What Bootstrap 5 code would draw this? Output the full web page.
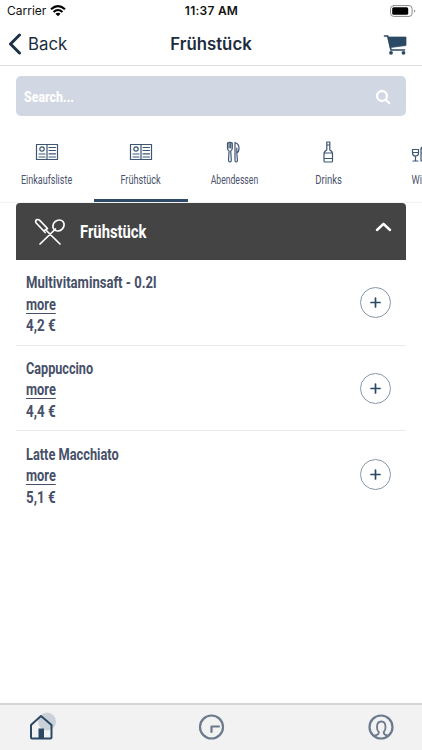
<!DOCTYPE html>
<html lang="de">
<head>
<meta charset="utf-8">
<meta name="viewport" content="width=device-width, initial-scale=1">
<title>Frühstück</title>
<link href="https://cdn.jsdelivr.net/npm/bootstrap@5.3.0/dist/css/bootstrap.min.css" rel="stylesheet">
<style>
body{font-family:Inter,"Liberation Sans",sans-serif;color:#1d2d40;background:#fff;height:750px;overflow:hidden}
svg{display:block;flex:none;fill:none;stroke-linecap:round;stroke-linejoin:round}
.status{height:22px;font-size:12px;line-height:22px;color:#111;padding:0 6px 0 7px}
.status .side{flex:1 1 0}
.wifi{stroke-linecap:butt}
.clock{font-weight:600;letter-spacing:.25px}
.topbar{height:44px;border-bottom:1px solid #dcdcde;padding:0 8px}
.topbar .side{flex:1 1 0}
.cart{margin:2px 7px 0 0}
.back{font-size:16.8px;line-height:20px;margin-left:6px}
.title{font-size:16.8px;font-weight:600;line-height:20px}
.narrow{font-family:Roboto,"Liberation Sans",sans-serif;display:inline-block;white-space:nowrap;transform-origin:0 50%;transform:scaleX(.8)}
.search{height:40px;margin:10px 16px 0;background:#d1d7e3;border-radius:5px;padding:1px 15px 0 8px}
.search .narrow{color:#fff;font-weight:800;font-size:15.5px;transform:scaleX(.8);margin-top:2px}
.tabs{height:87px;border-bottom:1px solid #f3f3f3}
.tab{flex:0 0 93.75px;padding-top:23px;border-bottom:3px solid transparent}
.tab.active{border-color:#2e4a66}
.tab svg{stroke:#3d5672;stroke-width:1.2}
.tab .narrow{font-size:12.5px;line-height:18px;margin-top:6px;color:#4a536b;transform-origin:50% 50%}
.tab .t1{transform:scaleX(.72)}
.tab .t2{transform:scaleX(.73)}
.tab .t3{transform:scaleX(.69)}
.tab .t4{transform:scaleX(.76)}
.tab .t5{transform:scaleX(.74)}
.group{margin:0 16px}
.grouphead{height:57px;background:#444;border-radius:4px 4px 0 0;padding:0 14px 0 18px}
.grouphead .narrow{color:#fff;font-weight:700;font-size:18.5px;margin:3px 0 0 14px}
.chevron{margin-bottom:10px}
.item{height:85.6px;border-bottom:1px solid #e8e9eb;padding:1px 15px 0 10px}
.item:last-child{border:0}
.lines{padding-top:3px}
.item .narrow{font-size:16px;font-weight:700;line-height:21.4px;color:#475068}
.item .i1{transform:scaleX(.817)}
.item .i2{transform:scaleX(.79)}
.item .price{transform:scaleX(.835)}
.more{text-decoration:underline;text-decoration-thickness:1px;text-underline-offset:2.5px}
.add{width:31px;height:31px;border:1px solid #8797a8;border-radius:50%;background:#fff}
.bottombar{height:47px;background:#f2f2f2;border-top:2px solid #d5d5d8;padding:0 27px 2px 28px}
</style>
<script src="https://cdn.jsdelivr.net/npm/bootstrap@5.3.0/dist/js/bootstrap.bundle.min.js"></script>
</head>
<body class="d-flex flex-column">
<div class="status d-flex align-items-center flex-shrink-0">
  <div class="side d-flex align-items-center gap-1"><span>Carrier</span>
    <svg class="wifi" width="16" height="12" viewBox="0 0 16 12" stroke="#000" stroke-width="2.1"><path d="M1 4.2Q8-2 15 4.2M3.5 7Q8 3 12.5 7"/><path d="M8 11.2 5.4 8.7Q8 6.600 10.600 8.700Z" fill="#000" stroke="none"/></svg>
  </div>
  <div class="clock">11:37 AM</div>
  <div class="side d-flex justify-content-end"><svg width="26" height="12" viewBox="0 0 26 12"><rect x=".6" y=".6" width="21.5" height="10.8" rx="3" stroke="#888"/><rect x="2.2" y="2.2" width="16" height="7.6" rx="1.6" fill="#000"/><path d="M24 4.4v3.2q1.3-.5 1.3-1.6T24 4.4" fill="#999"/></svg></div>
</div>
<header class="topbar d-flex align-items-center flex-shrink-0">
  <div class="side d-flex align-items-center"><svg width="14" height="22" viewBox="0 0 14 22" stroke="#1d3044" stroke-width="3"><path d="M11.500 2 2.500 11l9 9"/></svg><span class="back">Back</span></div>
  <div class="title">Frühstück</div>
  <div class="side d-flex justify-content-end"><svg class="cart" width="24" height="22" viewBox="0 0 24 22" stroke="#2b4865" stroke-width="1.6"><path d="M1.500 2h3.200l3.300 14H21.500"/><path d="M5.500 3H23v8.500L7.600 13.500Z" fill="#2b4865" stroke-width=".7"/><circle cx="8" cy="18.800" r="1.900" fill="#2b4865" stroke="none"/><circle cx="20.500" cy="18.800" r="1.900" fill="#2b4865" stroke="none"/></svg></div>
</header>
<div class="search d-flex align-items-center justify-content-between flex-shrink-0"><span class="narrow">Search...</span>
  <svg width="16" height="16" viewBox="0 0 16 16" stroke="#fff" stroke-width="2.3"><circle cx="7" cy="7" r="5"/><path d="m11 11 3.300 3.300"/></svg>
</div>
<nav class="tabs d-flex overflow-hidden flex-shrink-0">
  <div class="tab d-flex flex-column align-items-center"><svg width="24" height="26" viewBox="0 0 24 26"><path d="M1.500 5.500h21v15h-21zM12 5.500v15M4 15h6M4 18h6M14 8.500h6.500M14 11.500h6.500M14 14.800h6.500M14 18h6.500"/><circle cx="7" cy="10" r="2.200"/></svg><span class="narrow t1">Einkaufsliste</span></div>
  <div class="tab active d-flex flex-column align-items-center"><svg width="24" height="26" viewBox="0 0 24 26"><path d="M1.500 5.500h21v15h-21zM12 5.500v15M4 15h6M4 18h6M14 8.500h6.500M14 11.500h6.500M14 14.800h6.500M14 18h6.500"/><circle cx="7" cy="10" r="2.200"/></svg><span class="narrow t2">Frühstück</span></div>
  <div class="tab d-flex flex-column align-items-center"><svg width="24" height="26" viewBox="0 0 24 26" stroke-width="1"><path d="M5.500 4v5q0 2.300 1.600 3L6.500 21q0 2 1.400 2t1.400-2L8.700 12q1.600-.7 1.600-3V4q-2.400-1.300-4.800 0M7.100 4v5M8.700 4v5M13 3.500v18q0 1.500 1.200 1.500t1.200-1.500L14.800 14q2.200-1 2.200-5 0-4-4-5.500M14.800 14V9"/></svg><span class="narrow t3">Abendessen</span></div>
  <div class="tab d-flex flex-column align-items-center"><svg width="24" height="26" viewBox="0 0 24 26"><path d="M10.800 3h3v8q2.700 1.200 2.700 4v7q0 1-1 1H9q-1 0-1-1V15q0-2.800 2.800-4zM8 14h8.500M8 19.500h8.500M10.800 6h3"/></svg><span class="narrow t4">Drinks</span></div>
  <div class="tab d-flex flex-column align-items-center"><svg width="24" height="26" viewBox="0 0 24 26"><path d="M2.500 10.500h6v3.500q0 3-3 3t-3-3zM2.500 13.500h6M5.500 17v5M3 22h5M11 22V10q0-2 2-2V3h3v5q2 0 2 2v12zM11 10h7M11 14h7"/></svg><span class="narrow t5">Wine</span></div>
</nav>
<main class="group flex-grow-1">
  <div class="grouphead d-flex align-items-center">
    <svg width="32" height="30" viewBox="0 0 32 30" stroke="#fff" stroke-width="1.700"><path d="M6 27 21.500 12M26 27 12.800 14M11.200 15.500 2.200 6Q.8 3.400 3 2.600 4.500 2.200 6 3.700L13.500 11.500 9.800 14"/><ellipse cx="24.500" cy="8.500" rx="6" ry="5.100" transform="rotate(-42 24.500 8.500)"/></svg>
    <span class="narrow">Frühstück</span>
    <svg class="chevron ms-auto" width="18" height="12" viewBox="0 0 18 12" stroke="#fff" stroke-width="2.500"><path d="M3 9 9.500 2.800 16 9"/></svg>
  </div>
  <div>
    <div class="item d-flex align-items-center justify-content-between"><div class="lines d-flex flex-column align-items-start"><span class="narrow i1">Multivitaminsaft - 0.2l</span><span class="narrow more">more</span><span class="narrow price">4,2 €</span></div>
      <div class="add d-flex align-items-center justify-content-center"><svg width="11" height="11" viewBox="0 0 11 11" stroke="#2b4865" stroke-width="1.700"><path d="M1 5.500h9M5.500 1v9"/></svg></div></div>
    <div class="item d-flex align-items-center justify-content-between"><div class="lines d-flex flex-column align-items-start"><span class="narrow i2">Cappuccino</span><span class="narrow more">more</span><span class="narrow price">4,4 €</span></div>
      <div class="add d-flex align-items-center justify-content-center"><svg width="11" height="11" viewBox="0 0 11 11" stroke="#2b4865" stroke-width="1.700"><path d="M1 5.500h9M5.500 1v9"/></svg></div></div>
    <div class="item d-flex align-items-center justify-content-between"><div class="lines d-flex flex-column align-items-start"><span class="narrow i3">Latte Macchiato</span><span class="narrow more">more</span><span class="narrow price">5,1 €</span></div>
      <div class="add d-flex align-items-center justify-content-center"><svg width="11" height="11" viewBox="0 0 11 11" stroke="#2b4865" stroke-width="1.700"><path d="M1 5.500h9M5.500 1v9"/></svg></div></div>
  </div>
</main>
<footer class="bottombar d-flex align-items-center justify-content-between flex-shrink-0">
  <svg width="28" height="30" viewBox="0 0 28 30" stroke="#2b4865" stroke-width="2"><circle cx="19" cy="9.500" r="9" fill="#cbd1d9" stroke="none"/><path d="M3 13 13 4l10.500 9V25.500q0 1-1 1H4q-1 0-1-1z"/><path d="M10.500 16.500h5.500v10h-5.500z" fill="#2b4865" stroke="none"/></svg>
  <svg width="28" height="28" viewBox="0 0 28 28" stroke="#6b7a8d" stroke-width="2.200"><circle cx="13.500" cy="14" r="11.500"/><path d="M13.500 19v-5.500h7.500"/></svg>
  <svg width="28" height="28" viewBox="0 0 28 28" stroke="#6b7a8d" stroke-width="2.200"><circle cx="14" cy="14" r="11.500"/><path d="M8 22.500q3.800-.6 3.800-3.500-2-1.500-1.800-5 0-5.500 4.300-5.500t4.200 5.500q.2 3.500-1.800 5 0 2.900 3.500 3.500" stroke-width="1.800"/></svg>
</footer>
</body>
</html>
